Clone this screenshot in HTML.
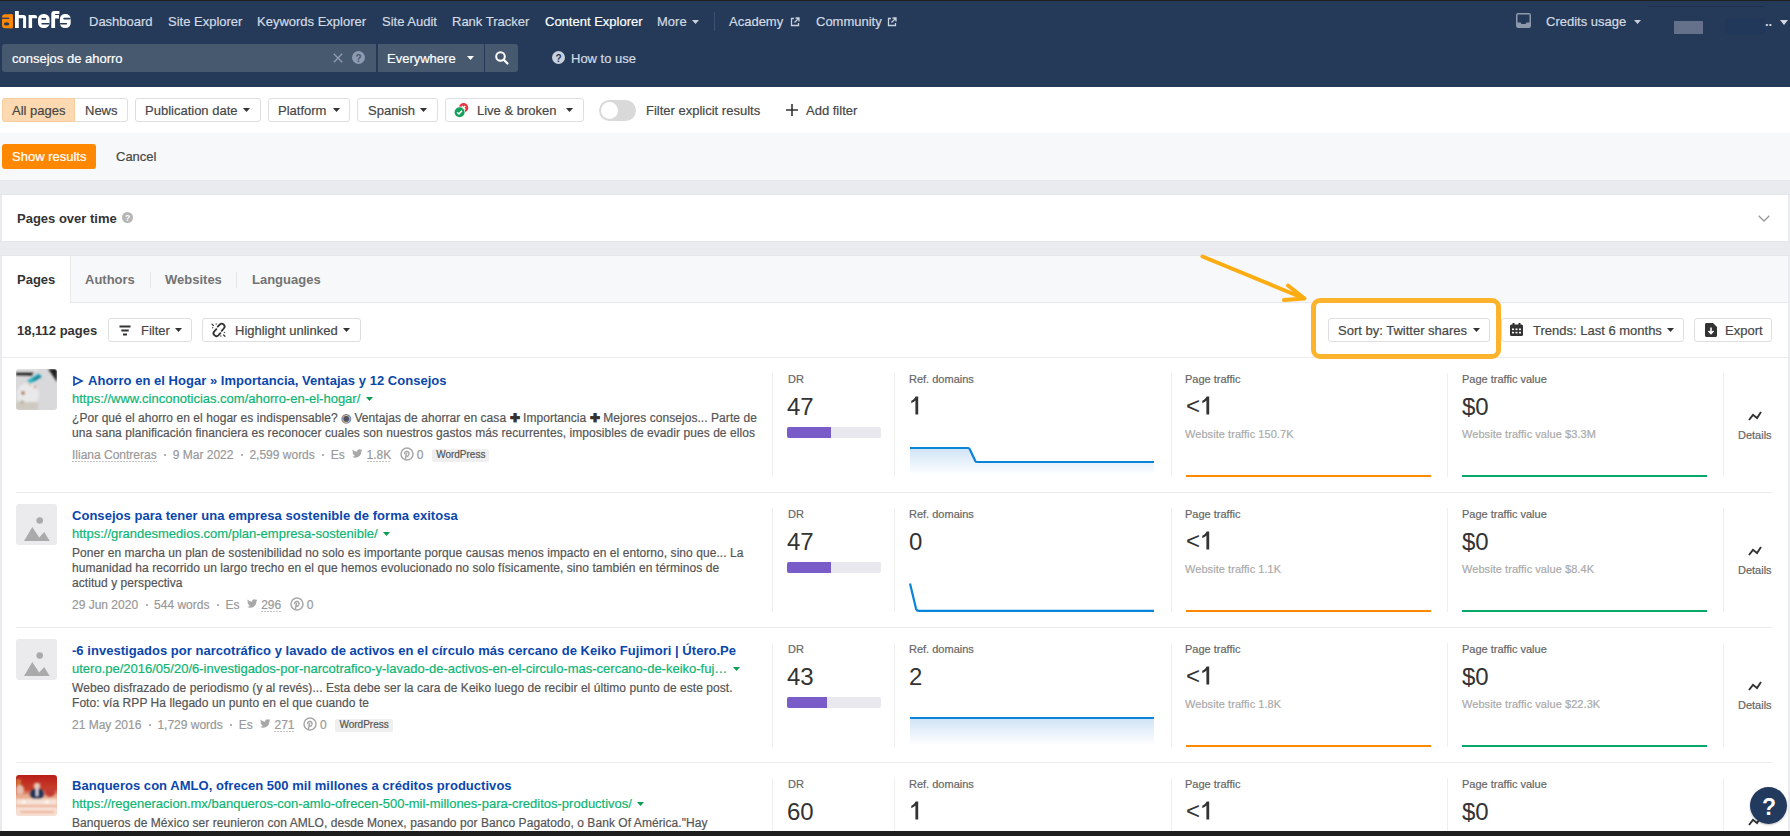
<!DOCTYPE html>
<html><head><meta charset="utf-8"><style>
*{box-sizing:border-box;margin:0;padding:0}
html,body{width:1790px;height:836px;overflow:hidden}
body{position:relative;background:#e9ebef;font-family:"Liberation Sans",sans-serif;color:#333;font-size:13px}
.a{position:absolute;white-space:nowrap;line-height:1}
.f13{font-size:13px}.f12{font-size:12px}.f11{font-size:11px}.f10{font-size:10px}.f24{font-size:24px}
.f13,.f12,.f11,.f10{-webkit-text-stroke:0.2px currentColor}
.f13{color:#474747}
.b{font-weight:bold;-webkit-text-stroke:0;color:#333}
.blk{position:absolute;display:block}
.btn{position:absolute;background:#fff;border:1px solid #dedede;border-radius:3px}
.nt{color:#d3dae3}
.meta{position:absolute;display:flex;align-items:baseline;white-space:nowrap;font-size:12px;line-height:1;color:#999;-webkit-text-stroke:0.2px currentColor}
.dot{display:inline-block;width:2px;height:2px;border-radius:1px;background:#999;margin:0 6.5px 0 7.5px;position:relative;top:-3px}
.ul{background-image:linear-gradient(90deg,#c4c4c4 70%,transparent 70%);background-size:3px 1px;background-repeat:repeat-x;background-position:0 100%;padding-bottom:1px;margin-bottom:-1px}
.tag{font-size:10px;color:#555;background:#efefef;border-radius:2px;padding:1px 4px 2px;position:relative;top:-1px}
</style></head><body>
<div class="blk" style="left:0px;top:0px;width:1790px;height:1px;background:#1e1e1e"></div>
<div class="blk" style="left:0px;top:1px;width:1790px;height:86px;background:#243a58"></div>
<svg class="blk" style="left:0px;top:8px;overflow:visible" width="74" height="24" viewBox="0 0 74 24"><g transform="translate(0,-8)"><rect x="2" y="14.2" width="10.8" height="14" rx="3.2" fill="#ff8800"/><rect x="9.4" y="14.2" width="3.4" height="14.1" fill="#ff8800"/><rect x="2" y="17.6" width="7.2" height="1.3" fill="#233a5c"/><ellipse cx="6.6" cy="23.9" rx="2.7" ry="1.6" fill="#233a5c"/><path d="M15 11.1H18.8V14.9H23.5Q26.1 14.9 26.1 17.5V28H23.1V18.3H18.8V28H15Z" fill="#fff"/><path d="M28.6 14.9H35Q37.1 14.9 37.1 17V18.3H32.1V28H28.6Z" fill="#fff"/><rect x="38" y="14" width="11.6" height="14.1" rx="5.3" fill="#fff"/><rect x="41.3" y="18.1" width="4.9" height="1.6" rx=".8" fill="#233a5c"/><rect x="41.3" y="23" width="8.4" height="1.6" rx=".8" fill="#233a5c"/><path d="M51.3 14Q51.3 11 54.3 11H59.4V14H55.1V15H59V18.4H55.1V28H51.3Z" fill="#fff"/><rect x="59.9" y="14" width="10.8" height="14.1" rx="5" fill="#fff"/><rect x="63.2" y="17.8" width="7.6" height="1.6" rx=".8" fill="#233a5c"/><rect x="59.8" y="23" width="7.4" height="1.6" rx=".8" fill="#233a5c"/></g></svg>
<div class="a f13 nt" style="left:89px;top:15px;">Dashboard</div>
<div class="a f13 nt" style="left:168px;top:15px;">Site Explorer</div>
<div class="a f13 nt" style="left:257px;top:15px;">Keywords Explorer</div>
<div class="a f13 nt" style="left:382px;top:15px;">Site Audit</div>
<div class="a f13 nt" style="left:452px;top:15px;">Rank Tracker</div>
<div class="a f13 nt" style="left:657px;top:15px;">More</div>
<div class="a f13 nt" style="left:729px;top:15px;">Academy</div>
<div class="a f13 nt" style="left:816px;top:15px;">Community</div>
<div class="a f13" style="left:545px;top:15px;color:#fff">Content Explorer</div>
<svg class="blk" style="left:692px;top:20px" width="7" height="4" viewBox="0 0 7 4"><path d="M0 0H7L3.5 4Z" fill="#c9d1dc"/></svg>
<div class="blk" style="left:714px;top:12px;width:1px;height:19px;background:#3b5274"></div>
<svg class="blk" style="left:790px;top:17px;overflow:visible" width="10" height="10" viewBox="0 0 10 10"><path d="M4 1.5H1.5V8.5H8.5V6" fill="none" stroke="#c9d1dc" stroke-width="1.3"/><path d="M5.5 1H9V4.5M9 1L4.5 5.5" fill="none" stroke="#c9d1dc" stroke-width="1.3"/></svg>
<svg class="blk" style="left:887px;top:17px;overflow:visible" width="10" height="10" viewBox="0 0 10 10"><path d="M4 1.5H1.5V8.5H8.5V6" fill="none" stroke="#c9d1dc" stroke-width="1.3"/><path d="M5.5 1H9V4.5M9 1L4.5 5.5" fill="none" stroke="#c9d1dc" stroke-width="1.3"/></svg>
<svg class="blk" style="left:1516px;top:13px;overflow:visible" width="15" height="15" viewBox="0 0 15 15"><rect x="0.75" y="0.75" width="13.5" height="13.5" rx="1.5" fill="none" stroke="#8e9aab" stroke-width="1.5"/><path d="M1 9.5H4.5L5.5 11H9.5L10.5 9.5H14V14H1Z" fill="#8e9aab"/></svg>
<div class="a f13 nt" style="left:1546px;top:15px;">Credits usage</div>
<svg class="blk" style="left:1634px;top:20px" width="7" height="4" viewBox="0 0 7 4"><path d="M0 0H7L3.5 4Z" fill="#c9d1dc"/></svg>
<div class="blk" style="left:1648px;top:6px;width:117px;height:1px;background:#1e3150"></div>
<div class="blk" style="left:1725px;top:18px;width:40px;height:16px;background:#22385a"></div>
<div class="blk" style="left:1674px;top:21px;width:29px;height:13px;background:#65718a"></div>
<div class="a f13 b nt" style="left:1765px;top:15px;">..</div>
<svg class="blk" style="left:1780px;top:20px" width="8" height="5" viewBox="0 0 8 5"><path d="M0 0H8L4.0 5Z" fill="#d3dae3"/></svg>
<div class="blk" style="left:2px;top:44px;width:516px;height:28px;background:#47596f;border-radius:3px"></div>
<div class="blk" style="left:376px;top:44px;width:2px;height:28px;background:#243a58"></div>
<div class="blk" style="left:484px;top:44px;width:1px;height:28px;background:#243a58"></div>
<div class="a f13" style="left:12px;top:52px;color:#fff">consejos de ahorro</div>
<svg class="blk" style="left:333px;top:53px;overflow:visible" width="10" height="10" viewBox="0 0 10 10"><path d="M0.8 0.8L9.2 9.2M9.2 0.8L0.8 9.2" stroke="#8d9ab0" stroke-width="1.4"/></svg>
<svg class="blk" style="left:352px;top:51px;overflow:visible" width="13" height="13" viewBox="0 0 13 13"><circle cx="6.5" cy="6.5" r="6.5" fill="#8d9ab0"/><text x="6.5" y="10.6" text-anchor="middle" font-family="Liberation Sans" font-weight="bold" font-size="10" fill="#47596f">?</text></svg>
<div class="a f13" style="left:387px;top:52px;color:#fff">Everywhere</div>
<svg class="blk" style="left:467px;top:56px" width="7" height="4" viewBox="0 0 7 4"><path d="M0 0H7L3.5 4Z" fill="#fff"/></svg>
<svg class="blk" style="left:495px;top:51px;overflow:visible" width="14" height="14" viewBox="0 0 14 14"><circle cx="5.5" cy="5.5" r="4.3" fill="none" stroke="#fff" stroke-width="2"/><path d="M8.7 8.7L12.5 12.5" stroke="#fff" stroke-width="2.2" stroke-linecap="round"/></svg>
<svg class="blk" style="left:552px;top:51px;overflow:visible" width="13" height="13" viewBox="0 0 13 13"><circle cx="6.5" cy="6.5" r="6.5" fill="#c9d1dc"/><text x="6.5" y="10.6" text-anchor="middle" font-family="Liberation Sans" font-weight="bold" font-size="10" fill="#233a5c">?</text></svg>
<div class="a f13 nt" style="left:571px;top:52px;">How to use</div>
<div class="blk" style="left:0px;top:87px;width:1790px;height:46px;background:#fff"></div>
<div class="blk" style="left:0px;top:133px;width:1790px;height:47px;background:#f7f8fa"></div>
<div class="blk" style="left:0px;top:180px;width:1790px;height:1px;background:#e3e5e9"></div>
<div class="blk" style="left:0px;top:194px;width:1790px;height:1px;background:#e4e6ea"></div>
<div class="blk" style="left:0px;top:241px;width:1790px;height:1px;background:#e4e6ea"></div>
<div class="blk" style="left:0px;top:255px;width:1790px;height:1px;background:#e4e6ea"></div>
<div class="btn" style="left:2px;top:98px;width:126px;height:24px"></div>
<div class="blk" style="left:2px;top:98px;width:73px;height:24px;background:#fcd9b1;border:1px solid #f7cda0;border-radius:3px 0 0 3px"></div>
<div class="a f13" style="left:12px;top:104px;">All pages</div>
<div class="a f13" style="left:85px;top:104px;">News</div>
<div class="btn" style="left:135px;top:98px;width:126px;height:24px"></div>
<div class="a f13" style="left:145px;top:104px;">Publication date</div>
<svg class="blk" style="left:243px;top:108px" width="7" height="4" viewBox="0 0 7 4"><path d="M0 0H7L3.5 4Z" fill="#333"/></svg>
<div class="btn" style="left:268px;top:98px;width:82px;height:24px"></div>
<div class="a f13" style="left:278px;top:104px;">Platform</div>
<svg class="blk" style="left:333px;top:108px" width="7" height="4" viewBox="0 0 7 4"><path d="M0 0H7L3.5 4Z" fill="#333"/></svg>
<div class="btn" style="left:357px;top:98px;width:81px;height:24px"></div>
<div class="a f13" style="left:368px;top:104px;">Spanish</div>
<svg class="blk" style="left:420px;top:108px" width="7" height="4" viewBox="0 0 7 4"><path d="M0 0H7L3.5 4Z" fill="#333"/></svg>
<div class="btn" style="left:445px;top:98px;width:139px;height:24px"></div>
<div class="a f13" style="left:477px;top:104px;">Live &amp; broken</div>
<svg class="blk" style="left:566px;top:108px" width="7" height="4" viewBox="0 0 7 4"><path d="M0 0H7L3.5 4Z" fill="#333"/></svg>
<svg class="blk" style="left:454px;top:103px;overflow:visible" width="15" height="15" viewBox="0 0 15 15"><circle cx="9.6" cy="4.8" r="4.7" fill="#e8353e"/><path d="M7.9 3.1L11.3 6.5M11.3 3.1L7.9 6.5" stroke="#fff" stroke-width="1.4"/><circle cx="5.6" cy="9.3" r="5.7" fill="#fff"/><circle cx="5.6" cy="9.3" r="5" fill="#14a05a"/><path d="M3.2 9.3L4.9 11L8 7.8" fill="none" stroke="#fff" stroke-width="1.5"/></svg>
<div class="blk" style="left:599px;top:100px;width:37px;height:21px;background:#d9d9d9;border-radius:11px"></div>
<div class="blk" style="left:601px;top:102px;width:17px;height:17px;background:#fff;border-radius:50%"></div>
<div class="a f13" style="left:646px;top:104px;">Filter explicit results</div>
<svg class="blk" style="left:786px;top:104px;overflow:visible" width="12" height="12" viewBox="0 0 12 12"><path d="M6 0V12M0 6H12" stroke="#333" stroke-width="1.6"/></svg>
<div class="a f13" style="left:806px;top:104px;">Add filter</div>
<div class="blk" style="left:2px;top:144px;width:94px;height:25px;background:#ff8800;border-radius:3px"></div>
<div class="a f13" style="left:12px;top:150px;color:#fff">Show results</div>
<div class="a f13" style="left:116px;top:150px;">Cancel</div>
<div class="blk" style="left:2px;top:195px;width:1786px;height:46px;background:#fff"></div>
<div class="a f13 b" style="left:17px;top:212px;">Pages over time</div>
<svg class="blk" style="left:122px;top:212px;overflow:visible" width="11" height="11" viewBox="0 0 11 11"><circle cx="5.5" cy="5.5" r="5.5" fill="#b5b5b5"/><text x="5.5" y="9" text-anchor="middle" font-family="Liberation Sans" font-weight="bold" font-size="8.5" fill="#fff">?</text></svg>
<svg class="blk" style="left:1758px;top:215px;overflow:visible" width="12" height="7" viewBox="0 0 12 7"><path d="M0.7 0.7L6 6L11.3 0.7" fill="none" stroke="#999" stroke-width="1.3"/></svg>
<div class="blk" style="left:2px;top:256px;width:1786px;height:575px;background:#fff"></div>
<div class="blk" style="left:70px;top:256px;width:1718px;height:47px;background:#f7f8fa;border-bottom:1px solid #e8e9ec;border-left:1px solid #e8e9ec"></div>
<div class="a f13 b" style="left:17px;top:273px;">Pages</div>
<div class="a f13 b" style="left:85px;top:273px;color:#737373">Authors</div>
<div class="a f13 b" style="left:165px;top:273px;color:#737373">Websites</div>
<div class="a f13 b" style="left:252px;top:273px;color:#737373">Languages</div>
<div class="blk" style="left:150px;top:272px;width:1px;height:16px;background:#e6e6e6"></div>
<div class="blk" style="left:236px;top:272px;width:1px;height:16px;background:#e6e6e6"></div>
<div class="a f13 b" style="left:17px;top:324px;">18,112 pages</div>
<div class="btn" style="left:108px;top:318px;width:84px;height:24px"></div>
<svg class="blk" style="left:119px;top:325px;overflow:visible" width="12" height="11" viewBox="0 0 12 11"><path d="M0.5 1.5H11.5M2.3 5.5H9.7M4 9.5H8" stroke="#333" stroke-width="1.8"/></svg>
<div class="a f13" style="left:141px;top:324px;">Filter</div>
<svg class="blk" style="left:175px;top:328px" width="7" height="4" viewBox="0 0 7 4"><path d="M0 0H7L3.5 4Z" fill="#333"/></svg>
<div class="btn" style="left:202px;top:318px;width:159px;height:24px"></div>
<svg class="blk" style="left:211px;top:323px;overflow:visible" width="15" height="14" viewBox="0 0 15 14"><path d="M6.7 3.6L8.8 1.5A2.83 2.83 0 0 1 12.8 5.5L10.7 7.8M5.4 6.2L3.3 8.3A2.83 2.83 0 0 0 7.3 12.3L9.4 10.2" fill="none" stroke="#333" stroke-width="1.8" stroke-linecap="round"/><path d="M1 1.1L2.4 2.6M12.6 12L14 13.3" stroke="#333" stroke-width="1.2" stroke-linecap="round"/><g fill="#555"><circle cx="5.2" cy="1" r=".75"/><circle cx="1.6" cy="4.8" r=".75"/><circle cx="13.5" cy="9.4" r=".75"/><circle cx="9.8" cy="13" r=".75"/></g></svg>
<div class="a f13" style="left:235px;top:324px;">Highlight unlinked</div>
<svg class="blk" style="left:343px;top:328px" width="7" height="4" viewBox="0 0 7 4"><path d="M0 0H7L3.5 4Z" fill="#333"/></svg>
<div class="btn" style="left:1328px;top:318px;width:162px;height:24px"></div>
<div class="a f13" style="left:1338px;top:324px;">Sort by: Twitter shares</div>
<svg class="blk" style="left:1473px;top:328px" width="7" height="4" viewBox="0 0 7 4"><path d="M0 0H7L3.5 4Z" fill="#333"/></svg>
<div class="btn" style="left:1501px;top:318px;width:183px;height:24px"></div>
<svg class="blk" style="left:1510px;top:323px;overflow:visible" width="13" height="13" viewBox="0 0 13 13"><rect x="0" y="1.5" width="13" height="11.5" rx="1.5" fill="#333"/><rect x="2.5" y="0" width="2" height="3" fill="#333"/><rect x="8.5" y="0" width="2" height="3" fill="#333"/><g fill="#fff"><rect x="2" y="5.5" width="2" height="1.6"/><rect x="5.5" y="5.5" width="2" height="1.6"/><rect x="9" y="5.5" width="2" height="1.6"/><rect x="2" y="8.8" width="2" height="1.6"/><rect x="5.5" y="8.8" width="2" height="1.6"/><rect x="9" y="8.8" width="2" height="1.6"/></g></svg>
<div class="a f13" style="left:1533px;top:324px;">Trends: Last 6 months</div>
<svg class="blk" style="left:1667px;top:328px" width="7" height="4" viewBox="0 0 7 4"><path d="M0 0H7L3.5 4Z" fill="#333"/></svg>
<div class="btn" style="left:1694px;top:318px;width:78px;height:24px"></div>
<svg class="blk" style="left:1705px;top:323px;overflow:visible" width="12" height="14" viewBox="0 0 12 14"><path d="M1.5 0H8L12 4V12.5C12 13.3 11.3 14 10.5 14H1.5C0.7 14 0 13.3 0 12.5V1.5C0 0.7 0.7 0 1.5 0Z" fill="#333"/><path d="M6 4.5V10.5M3.5 8L6 10.6L8.5 8" fill="none" stroke="#fff" stroke-width="1.6"/></svg>
<div class="a f13" style="left:1725px;top:324px;">Export</div>
<div class="blk" style="left:2px;top:357px;width:1786px;height:1px;background:#ececec"></div>
<svg class="blk" style="left:16px;top:369px;overflow:visible" width="41" height="41" viewBox="0 0 41 41"><defs><filter id="bl1" x="-5%" y="-5%" width="110%" height="110%"><feGaussianBlur stdDeviation="0.9"/></filter><clipPath id="cp1"><rect width="41" height="41" rx="3"/></clipPath></defs><g clip-path="url(#cp1)"><rect width="41" height="41" fill="#d9d9db"/><g filter="url(#bl1)"><path d="M0 0H22L20 7C14 7 6 8 0 9Z" fill="#e0e0e0"/><path d="M0 3H18L16 7H0Z" fill="#1e1e1e"/><path d="M32 0H41V13C38 8 35 4 32 0Z" fill="#1a1a1a"/><path d="M11 12L22 4L26 8L14 15Z" fill="#2bb5c4"/><path d="M17 10L24 6L25 8L18 12Z" fill="#1d6f8a"/><ellipse cx="12" cy="26" rx="11" ry="12" fill="#e9e9eb"/><circle cx="7" cy="24" r="2" fill="#b07c52"/><circle cx="19" cy="18" r="1.3" fill="#e08a5e"/><circle cx="14" cy="16" r="1" fill="#d9a070"/><rect x="0" y="33" width="22" height="8" fill="#cfcac0"/><circle cx="6" cy="33" r="2" fill="#a89a80" opacity=".6"/></g></g></svg>
<svg class="blk" style="left:73px;top:376px;overflow:visible" width="10" height="10" viewBox="0 0 10 10"><path d="M1 1L9 5L1 9Z" fill="none" stroke="#0a47ac" stroke-width="1.6" stroke-linejoin="miter"/></svg>
<div class="a f13 b" style="left:88px;top:374px;color:#0a47ac;letter-spacing:0.03px">Ahorro en el Hogar » Importancia, Ventajas y 12 Consejos</div>
<div class="a f13" style="left:72px;top:392px;color:#0cb574">https://www.cinconoticias.com/ahorro-en-el-hogar/ <svg width="7" height="4" style="margin-left:1.7px;vertical-align:2px"><path d="M0 0H7L3.5 4Z" fill="#0a9c50"/></svg></div>
<div class="a f12" style="left:72px;top:412px;color:#555;letter-spacing:0.058px">¿Por qué el ahorro en el hogar es indispensable? ◉ Ventajas de ahorrar en casa <b style="color:#333">✚</b> Importancia <b style="color:#333">✚</b> Mejores consejos... Parte de</div>
<div class="a f12" style="left:72px;top:427px;color:#555;letter-spacing:0.058px">una sana planificación financiera es reconocer cuales son nuestros gastos más recurrentes, imposibles de evadir pues de ellos</div>
<div class="meta" style="left:72px;top:449px"><span class="ul">Iliana Contreras</span><span class="dot"></span><span>9 Mar 2022</span><span class="dot"></span><span>2,599 words</span><span class="dot"></span><span>Es</span><svg width="10.5" height="9" viewBox="0 0 24 20" style="margin:0 3.9px 0 7.3px;align-self:flex-start;position:relative;top:0px"><path d="M24 2.4c-.9.4-1.8.6-2.8.8 1-.6 1.8-1.6 2.2-2.7-1 .6-2 1-3.1 1.2C19.3.6 18 0 16.6 0c-2.7 0-4.9 2.2-4.9 4.9 0 .4 0 .8.1 1.1C7.7 5.8 4.1 3.9 1.7.9c-.4.7-.7 1.6-.7 2.5 0 1.7.9 3.2 2.2 4.1-.8 0-1.6-.2-2.2-.6v.1c0 2.4 1.7 4.4 3.9 4.8-.4.1-.8.2-1.3.2-.3 0-.6 0-.9-.1.6 2 2.4 3.4 4.6 3.4-1.7 1.3-3.8 2.1-6.1 2.1-.4 0-.8 0-1.2-.1 2.2 1.4 4.8 2.2 7.5 2.2 9.1 0 14-7.5 14-14v-.6c1-.7 1.8-1.6 2.5-2.5z" fill="#a8a8a8"/></svg><span class="ul">1.8K</span><svg width="14" height="14" viewBox="0 0 14 14" style="margin:0 2.9px 0 8.6px;align-self:flex-start;position:relative;top:-2px"><circle cx="7" cy="7" r="6" fill="none" stroke="#a8a8a8" stroke-width="1.5"/><path d="M6.6 5.8L5.3 12.6" stroke="#a8a8a8" stroke-width="1.5"/><path d="M5.6 8.8C6.3 9.4 7.4 9.4 8.2 8.8C9.1 8.1 9.3 6.7 8.8 5.7C8.2 4.6 6.8 4.2 5.7 4.7C4.7 5.2 4.3 6.3 4.6 7.3" fill="none" stroke="#a8a8a8" stroke-width="1.5"/></svg><span>0</span><span class="tag" style="margin-left:8.8px">WordPress</span></div>
<div class="blk" style="left:772px;top:373px;width:1px;height:104px;background:#efefef"></div>
<div class="blk" style="left:894px;top:373px;width:1px;height:104px;background:#efefef"></div>
<div class="blk" style="left:1171px;top:373px;width:1px;height:104px;background:#efefef"></div>
<div class="blk" style="left:1447px;top:373px;width:1px;height:104px;background:#efefef"></div>
<div class="blk" style="left:1723px;top:373px;width:1px;height:104px;background:#efefef"></div>
<div class="a f11" style="left:788px;top:374px;color:#666">DR</div>
<div class="a f24" style="left:787px;top:395px;">47</div>
<div class="blk" style="left:787px;top:427px;width:94px;height:11px;background:#e8e8ee;border-radius:2px"></div>
<div class="blk" style="left:787px;top:427px;width:44px;height:11px;background:#7a5cc8;border-radius:2px 0 0 2px"></div>
<div class="a f11" style="left:909px;top:374px;color:#666">Ref. domains</div>
<svg class="blk" style="left:909px;top:390px;overflow:visible" width="14" height="26" viewBox="0 0 14 26"><path d="M6.6 6.6H9.2V24.4H6.4V10.6C5.4 11.6 3.9 12.6 2.3 13.2V10.8C4.3 9.9 5.8 8.4 6.6 6.6Z" fill="#333"/></svg>
<div class="a f11" style="left:1185px;top:374px;color:#666">Page traffic</div>
<div class="a f24" style="left:1186px;top:394px;">&lt;</div>
<svg class="blk" style="left:1200px;top:390px;overflow:visible" width="14" height="26" viewBox="0 0 14 26"><path d="M6.6 6.6H9.2V24.4H6.4V10.6C5.4 11.6 3.9 12.6 2.3 13.2V10.8C4.3 9.9 5.8 8.4 6.6 6.6Z" fill="#333"/></svg>
<div class="a f11" style="left:1462px;top:374px;color:#666">Page traffic value</div>
<div class="a f24" style="left:1462px;top:395px;">$0</div>
<div class="a f11" style="left:1185px;top:429px;color:#aaa;letter-spacing:0.06px">Website traffic 150.7K</div>
<div class="a f11" style="left:1462px;top:429px;color:#aaa;letter-spacing:0.06px">Website traffic value $3.3M</div>
<div class="blk" style="left:1186px;top:475px;width:245px;height:2px;background:#ff8a00"></div>
<div class="blk" style="left:1462px;top:475px;width:245px;height:2px;background:#08a86a"></div>
<svg class="blk" style="left:909px;top:440px;overflow:visible" width="246" height="38" viewBox="0 0 246 38"><defs><linearGradient id="g0" x1="0" y1="0" x2="0" y2="1"><stop offset="0" stop-color="#cfe3f6"/><stop offset="1" stop-color="#fff"/></linearGradient></defs><path d="M1 8H59Q60.3 8 60.8 9.2L66.3 21Q66.8 22 68 22H245V35H1Z" fill="url(#g0)"/><path d="M1 8H59Q60.3 8 60.8 9.2L66.3 21Q66.8 22 68 22H245" fill="none" stroke="#0a84d8" stroke-width="2.2"/></svg>
<svg class="blk" style="left:1748px;top:411px;overflow:visible" width="14" height="10" viewBox="0 0 14 10"><path d="M1 9L5 3.8L9 7L13 1" fill="none" stroke="#333" stroke-width="1.9"/></svg>
<div class="a f11" style="left:1738px;top:430px;color:#666">Details</div>
<div class="blk" style="left:16px;top:492px;width:1756px;height:1px;background:#ececec"></div>
<svg class="blk" style="left:16px;top:504px;overflow:visible" width="41" height="41" viewBox="0 0 41 41"><rect width="41" height="41" rx="3" fill="#ebebee"/><circle cx="23.7" cy="16.5" r="3.3" fill="#aaa"/><path d="M8 39V39L16.3 24.9L23.2 35.5L28.2 30L33.7 39Z" fill="#aaa" transform="translate(0,-2)"/></svg>
<div class="a f13 b" style="left:72px;top:509px;color:#0a47ac;letter-spacing:0.035px">Consejos para tener una empresa sostenible de forma exitosa</div>
<div class="a f13" style="left:72px;top:527px;color:#0cb574">https://grandesmedios.com/plan-empresa-sostenible/ <svg width="7" height="4" style="margin-left:1.7px;vertical-align:2px"><path d="M0 0H7L3.5 4Z" fill="#0a9c50"/></svg></div>
<div class="a f12" style="left:72px;top:547px;color:#555;letter-spacing:0.058px">Poner en marcha un plan de sostenibilidad no solo es importante porque causas menos impacto en el entorno, sino que... La</div>
<div class="a f12" style="left:72px;top:562px;color:#555;letter-spacing:0.058px">humanidad ha recorrido un largo trecho en el que hemos evolucionado no solo físicamente, sino también en términos de</div>
<div class="a f12" style="left:72px;top:577px;color:#555;letter-spacing:0.058px">actitud y perspectiva</div>
<div class="meta" style="left:72px;top:599px"><span>29 Jun 2020</span><span class="dot"></span><span>544 words</span><span class="dot"></span><span>Es</span><svg width="10.5" height="9" viewBox="0 0 24 20" style="margin:0 3.9px 0 7.3px;align-self:flex-start;position:relative;top:0px"><path d="M24 2.4c-.9.4-1.8.6-2.8.8 1-.6 1.8-1.6 2.2-2.7-1 .6-2 1-3.1 1.2C19.3.6 18 0 16.6 0c-2.7 0-4.9 2.2-4.9 4.9 0 .4 0 .8.1 1.1C7.7 5.8 4.1 3.9 1.7.9c-.4.7-.7 1.6-.7 2.5 0 1.7.9 3.2 2.2 4.1-.8 0-1.6-.2-2.2-.6v.1c0 2.4 1.7 4.4 3.9 4.8-.4.1-.8.2-1.3.2-.3 0-.6 0-.9-.1.6 2 2.4 3.4 4.6 3.4-1.7 1.3-3.8 2.1-6.1 2.1-.4 0-.8 0-1.2-.1 2.2 1.4 4.8 2.2 7.5 2.2 9.1 0 14-7.5 14-14v-.6c1-.7 1.8-1.6 2.5-2.5z" fill="#a8a8a8"/></svg><span class="ul">296</span><svg width="14" height="14" viewBox="0 0 14 14" style="margin:0 2.9px 0 8.6px;align-self:flex-start;position:relative;top:-2px"><circle cx="7" cy="7" r="6" fill="none" stroke="#a8a8a8" stroke-width="1.5"/><path d="M6.6 5.8L5.3 12.6" stroke="#a8a8a8" stroke-width="1.5"/><path d="M5.6 8.8C6.3 9.4 7.4 9.4 8.2 8.8C9.1 8.1 9.3 6.7 8.8 5.7C8.2 4.6 6.8 4.2 5.7 4.7C4.7 5.2 4.3 6.3 4.6 7.3" fill="none" stroke="#a8a8a8" stroke-width="1.5"/></svg><span>0</span></div>
<div class="blk" style="left:772px;top:508px;width:1px;height:104px;background:#efefef"></div>
<div class="blk" style="left:894px;top:508px;width:1px;height:104px;background:#efefef"></div>
<div class="blk" style="left:1171px;top:508px;width:1px;height:104px;background:#efefef"></div>
<div class="blk" style="left:1447px;top:508px;width:1px;height:104px;background:#efefef"></div>
<div class="blk" style="left:1723px;top:508px;width:1px;height:104px;background:#efefef"></div>
<div class="a f11" style="left:788px;top:509px;color:#666">DR</div>
<div class="a f24" style="left:787px;top:530px;">47</div>
<div class="blk" style="left:787px;top:562px;width:94px;height:11px;background:#e8e8ee;border-radius:2px"></div>
<div class="blk" style="left:787px;top:562px;width:44px;height:11px;background:#7a5cc8;border-radius:2px 0 0 2px"></div>
<div class="a f11" style="left:909px;top:509px;color:#666">Ref. domains</div>
<div class="a f24" style="left:909px;top:530px;">0</div>
<div class="a f11" style="left:1185px;top:509px;color:#666">Page traffic</div>
<div class="a f24" style="left:1186px;top:529px;">&lt;</div>
<svg class="blk" style="left:1200px;top:525px;overflow:visible" width="14" height="26" viewBox="0 0 14 26"><path d="M6.6 6.6H9.2V24.4H6.4V10.6C5.4 11.6 3.9 12.6 2.3 13.2V10.8C4.3 9.9 5.8 8.4 6.6 6.6Z" fill="#333"/></svg>
<div class="a f11" style="left:1462px;top:509px;color:#666">Page traffic value</div>
<div class="a f24" style="left:1462px;top:530px;">$0</div>
<div class="a f11" style="left:1185px;top:564px;color:#aaa;letter-spacing:0.06px">Website traffic 1.1K</div>
<div class="a f11" style="left:1462px;top:564px;color:#aaa;letter-spacing:0.06px">Website traffic value $8.4K</div>
<div class="blk" style="left:1186px;top:610px;width:245px;height:2px;background:#ff8a00"></div>
<div class="blk" style="left:1462px;top:610px;width:245px;height:2px;background:#08a86a"></div>
<svg class="blk" style="left:909px;top:575px;overflow:visible" width="246" height="38" viewBox="0 0 246 38"><defs><linearGradient id="g1" x1="0" y1="0" x2="0" y2="1"><stop offset="0" stop-color="#cfe3f6"/><stop offset="1" stop-color="#fff"/></linearGradient></defs><path d="M1 8.5L7 33.6Q7.6 35.8 9.8 35.8H245" fill="none" stroke="#0a84d8" stroke-width="2.2"/></svg>
<svg class="blk" style="left:1748px;top:546px;overflow:visible" width="14" height="10" viewBox="0 0 14 10"><path d="M1 9L5 3.8L9 7L13 1" fill="none" stroke="#333" stroke-width="1.9"/></svg>
<div class="a f11" style="left:1738px;top:565px;color:#666">Details</div>
<div class="blk" style="left:16px;top:627px;width:1756px;height:1px;background:#ececec"></div>
<svg class="blk" style="left:16px;top:639px;overflow:visible" width="41" height="41" viewBox="0 0 41 41"><rect width="41" height="41" rx="3" fill="#ebebee"/><circle cx="23.7" cy="16.5" r="3.3" fill="#aaa"/><path d="M8 39V39L16.3 24.9L23.2 35.5L28.2 30L33.7 39Z" fill="#aaa" transform="translate(0,-2)"/></svg>
<div class="a f13 b" style="left:72px;top:644px;color:#0a47ac;letter-spacing:0.035px">-6 investigados por narcotráfico y lavado de activos en el círculo más cercano de Keiko Fujimori | Útero.Pe</div>
<div class="a f13" style="left:72px;top:662px;color:#0cb574">utero.pe/2016/05/20/6-investigados-por-narcotrafico-y-lavado-de-activos-en-el-circulo-mas-cercano-de-keiko-fuj… <svg width="7" height="4" style="margin-left:1.7px;vertical-align:2px"><path d="M0 0H7L3.5 4Z" fill="#0a9c50"/></svg></div>
<div class="a f12" style="left:72px;top:682px;color:#555;letter-spacing:0.058px">Webeo disfrazado de periodismo (y al revés)... Esta debe ser la cara de Keiko luego de recibir el último punto de este post.</div>
<div class="a f12" style="left:72px;top:697px;color:#555;letter-spacing:0.058px">Foto: vía RPP Ha llegado un punto en el que cuando te</div>
<div class="meta" style="left:72px;top:719px"><span>21 May 2016</span><span class="dot"></span><span>1,729 words</span><span class="dot"></span><span>Es</span><svg width="10.5" height="9" viewBox="0 0 24 20" style="margin:0 3.9px 0 7.3px;align-self:flex-start;position:relative;top:0px"><path d="M24 2.4c-.9.4-1.8.6-2.8.8 1-.6 1.8-1.6 2.2-2.7-1 .6-2 1-3.1 1.2C19.3.6 18 0 16.6 0c-2.7 0-4.9 2.2-4.9 4.9 0 .4 0 .8.1 1.1C7.7 5.8 4.1 3.9 1.7.9c-.4.7-.7 1.6-.7 2.5 0 1.7.9 3.2 2.2 4.1-.8 0-1.6-.2-2.2-.6v.1c0 2.4 1.7 4.4 3.9 4.8-.4.1-.8.2-1.3.2-.3 0-.6 0-.9-.1.6 2 2.4 3.4 4.6 3.4-1.7 1.3-3.8 2.1-6.1 2.1-.4 0-.8 0-1.2-.1 2.2 1.4 4.8 2.2 7.5 2.2 9.1 0 14-7.5 14-14v-.6c1-.7 1.8-1.6 2.5-2.5z" fill="#a8a8a8"/></svg><span class="ul">271</span><svg width="14" height="14" viewBox="0 0 14 14" style="margin:0 2.9px 0 8.6px;align-self:flex-start;position:relative;top:-2px"><circle cx="7" cy="7" r="6" fill="none" stroke="#a8a8a8" stroke-width="1.5"/><path d="M6.6 5.8L5.3 12.6" stroke="#a8a8a8" stroke-width="1.5"/><path d="M5.6 8.8C6.3 9.4 7.4 9.4 8.2 8.8C9.1 8.1 9.3 6.7 8.8 5.7C8.2 4.6 6.8 4.2 5.7 4.7C4.7 5.2 4.3 6.3 4.6 7.3" fill="none" stroke="#a8a8a8" stroke-width="1.5"/></svg><span>0</span><span class="tag" style="margin-left:8.8px">WordPress</span></div>
<div class="blk" style="left:772px;top:643px;width:1px;height:104px;background:#efefef"></div>
<div class="blk" style="left:894px;top:643px;width:1px;height:104px;background:#efefef"></div>
<div class="blk" style="left:1171px;top:643px;width:1px;height:104px;background:#efefef"></div>
<div class="blk" style="left:1447px;top:643px;width:1px;height:104px;background:#efefef"></div>
<div class="blk" style="left:1723px;top:643px;width:1px;height:104px;background:#efefef"></div>
<div class="a f11" style="left:788px;top:644px;color:#666">DR</div>
<div class="a f24" style="left:787px;top:665px;">43</div>
<div class="blk" style="left:787px;top:697px;width:94px;height:11px;background:#e8e8ee;border-radius:2px"></div>
<div class="blk" style="left:787px;top:697px;width:40px;height:11px;background:#7a5cc8;border-radius:2px 0 0 2px"></div>
<div class="a f11" style="left:909px;top:644px;color:#666">Ref. domains</div>
<div class="a f24" style="left:909px;top:665px;">2</div>
<div class="a f11" style="left:1185px;top:644px;color:#666">Page traffic</div>
<div class="a f24" style="left:1186px;top:664px;">&lt;</div>
<svg class="blk" style="left:1200px;top:660px;overflow:visible" width="14" height="26" viewBox="0 0 14 26"><path d="M6.6 6.6H9.2V24.4H6.4V10.6C5.4 11.6 3.9 12.6 2.3 13.2V10.8C4.3 9.9 5.8 8.4 6.6 6.6Z" fill="#333"/></svg>
<div class="a f11" style="left:1462px;top:644px;color:#666">Page traffic value</div>
<div class="a f24" style="left:1462px;top:665px;">$0</div>
<div class="a f11" style="left:1185px;top:699px;color:#aaa;letter-spacing:0.06px">Website traffic 1.8K</div>
<div class="a f11" style="left:1462px;top:699px;color:#aaa;letter-spacing:0.06px">Website traffic value $22.3K</div>
<div class="blk" style="left:1186px;top:745px;width:245px;height:2px;background:#ff8a00"></div>
<div class="blk" style="left:1462px;top:745px;width:245px;height:2px;background:#08a86a"></div>
<svg class="blk" style="left:909px;top:710px;overflow:visible" width="246" height="38" viewBox="0 0 246 38"><defs><linearGradient id="g2" x1="0" y1="0" x2="0" y2="1"><stop offset="0" stop-color="#cfe3f6"/><stop offset="1" stop-color="#fff"/></linearGradient></defs><path d="M1 8H245V35H1Z" fill="url(#g2)"/><path d="M1 8H245" fill="none" stroke="#0a84d8" stroke-width="2.2"/></svg>
<svg class="blk" style="left:1748px;top:681px;overflow:visible" width="14" height="10" viewBox="0 0 14 10"><path d="M1 9L5 3.8L9 7L13 1" fill="none" stroke="#333" stroke-width="1.9"/></svg>
<div class="a f11" style="left:1738px;top:700px;color:#666">Details</div>
<div class="blk" style="left:16px;top:762px;width:1756px;height:1px;background:#ececec"></div>
<svg class="blk" style="left:16px;top:775px;overflow:visible" width="41" height="41" viewBox="0 0 41 41"><defs><filter id="bl4" x="-5%" y="-5%" width="110%" height="110%"><feGaussianBlur stdDeviation="0.9"/></filter><clipPath id="cp4"><rect width="41" height="41" rx="3"/></clipPath><linearGradient id="am" x1="0" y1="0" x2="0" y2="1"><stop offset="0" stop-color="#b91d1a"/><stop offset=".35" stop-color="#c8402a"/><stop offset=".5" stop-color="#e9a88a"/><stop offset="1" stop-color="#f4d9cb"/></linearGradient></defs><g clip-path="url(#cp4)"><rect width="41" height="41" fill="url(#am)"/><g filter="url(#bl4)"><rect x="0" y="4" width="5" height="10" fill="#d9a040" opacity=".6"/><ellipse cx="4" cy="15" rx="4" ry="5" fill="#e8c0b0"/><ellipse cx="21" cy="19" rx="7" ry="6" fill="#283358"/><circle cx="21" cy="11" r="3.2" fill="#e5c9bb"/><rect x="20" y="14" width="2" height="7" fill="#dfe3f0"/><ellipse cx="34" cy="17" rx="5" ry="5" fill="#c23a30"/><rect x="0" y="24" width="41" height="17" fill="#f6e2d6"/><path d="M0 30H41V32H0ZM4 36H38V38H4Z" fill="#e8946a" opacity=".7"/><circle cx="8" cy="27" r="1.6" fill="#fff"/><circle cx="31" cy="27" r="1.6" fill="#fff"/></g></g></svg>
<div class="a f13 b" style="left:72px;top:779px;color:#0a47ac;letter-spacing:0.035px">Banqueros con AMLO, ofrecen 500 mil millones a créditos productivos</div>
<div class="a f13" style="left:72px;top:797px;color:#0cb574">https://regeneracion.mx/banqueros-con-amlo-ofrecen-500-mil-millones-para-creditos-productivos/ <svg width="7" height="4" style="margin-left:1.7px;vertical-align:2px"><path d="M0 0H7L3.5 4Z" fill="#0a9c50"/></svg></div>
<div class="a f12" style="left:72px;top:817px;color:#555;letter-spacing:0.058px">Banqueros de México ser reunieron con AMLO, desde Monex, pasando por Banco Pagatodo, o Bank Of América."Hay</div>
<div class="blk" style="left:772px;top:778px;width:1px;height:104px;background:#efefef"></div>
<div class="blk" style="left:894px;top:778px;width:1px;height:104px;background:#efefef"></div>
<div class="blk" style="left:1171px;top:778px;width:1px;height:104px;background:#efefef"></div>
<div class="blk" style="left:1447px;top:778px;width:1px;height:104px;background:#efefef"></div>
<div class="blk" style="left:1723px;top:778px;width:1px;height:104px;background:#efefef"></div>
<div class="a f11" style="left:788px;top:779px;color:#666">DR</div>
<div class="a f24" style="left:787px;top:800px;">60</div>
<div class="blk" style="left:787px;top:832px;width:94px;height:11px;background:#e8e8ee;border-radius:2px"></div>
<div class="blk" style="left:787px;top:832px;width:56px;height:11px;background:#7a5cc8;border-radius:2px 0 0 2px"></div>
<div class="a f11" style="left:909px;top:779px;color:#666">Ref. domains</div>
<svg class="blk" style="left:909px;top:795px;overflow:visible" width="14" height="26" viewBox="0 0 14 26"><path d="M6.6 6.6H9.2V24.4H6.4V10.6C5.4 11.6 3.9 12.6 2.3 13.2V10.8C4.3 9.9 5.8 8.4 6.6 6.6Z" fill="#333"/></svg>
<div class="a f11" style="left:1185px;top:779px;color:#666">Page traffic</div>
<div class="a f24" style="left:1186px;top:799px;">&lt;</div>
<svg class="blk" style="left:1200px;top:795px;overflow:visible" width="14" height="26" viewBox="0 0 14 26"><path d="M6.6 6.6H9.2V24.4H6.4V10.6C5.4 11.6 3.9 12.6 2.3 13.2V10.8C4.3 9.9 5.8 8.4 6.6 6.6Z" fill="#333"/></svg>
<div class="a f11" style="left:1462px;top:779px;color:#666">Page traffic value</div>
<div class="a f24" style="left:1462px;top:800px;">$0</div>
<svg class="blk" style="left:1748px;top:816px;overflow:visible" width="14" height="10" viewBox="0 0 14 10"><path d="M1 9L5 3.8L9 7L13 1" fill="none" stroke="#333" stroke-width="1.9"/></svg>
<div class="blk" style="left:1750px;top:787px;width:37px;height:37px;border-radius:50%;background:#213a5d;box-shadow:0 1px 2px rgba(0,0,0,.25)"></div>
<div class="a f24 b" style="left:1762px;top:796px;color:#fff;font-size:23px">?</div>
<div class="blk" style="left:1311px;top:298px;width:190px;height:61px;border:5px solid #fdb42c;border-radius:9px"></div>
<svg class="blk" style="left:1200px;top:254px;overflow:visible" width="108" height="48" viewBox="0 0 108 48"><path d="M2.5 2.5L103 44" stroke="#fdac12" stroke-width="4" stroke-linecap="round"/><path d="M88 31.5L104.5 44.5L84 46" fill="none" stroke="#fdac12" stroke-width="4" stroke-linecap="round" stroke-linejoin="round"/></svg>
<div class="blk" style="left:0px;top:831px;width:1790px;height:5px;background:#1e1e1e"></div>
</body></html>
